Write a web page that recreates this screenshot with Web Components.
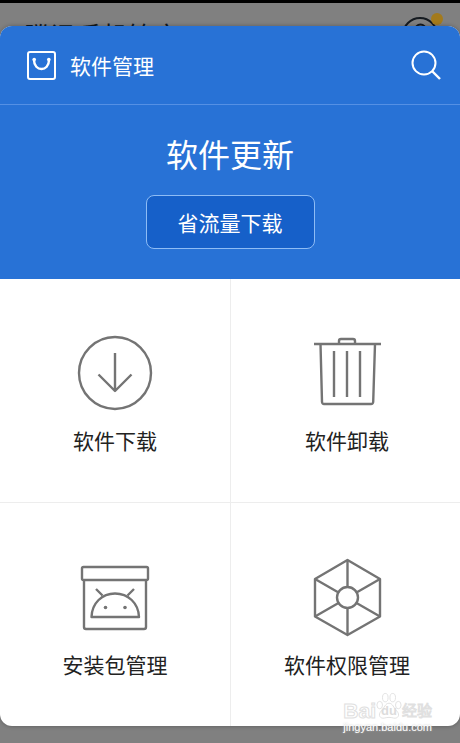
<!DOCTYPE html>
<html lang="zh-CN">
<head>
  <meta charset="UTF-8">
  <meta name="viewport" content="width=device-width, initial-scale=1">
  <title>软件管理</title>
  <style>
    body {
      margin: 0;
      background: #808080;
      color: #222;
      font-family: "Noto Sans CJK SC", sans-serif;
    }
  </style>
</head>
<body>
  <app-backdrop>腾讯手机管家</app-backdrop>
  <soft-sheet>
    <sheet-header slot="header">软件管理</sheet-header>
    <update-banner slot="banner" action="省流量下载">软件更新</update-banner>
    <tool-tile icon="download">软件下载</tool-tile>
    <tool-tile icon="trash">软件卸载</tool-tile>
    <tool-tile icon="package">安装包管理</tool-tile>
    <tool-tile icon="permission">软件权限管理</tool-tile>
  </soft-sheet>
  <water-mark></water-mark>

  <script>
    // dimmed page behind the sheet, only its top edge shows
    class AppBackdrop extends HTMLElement {
      constructor() {
        super();
        const shadow = this.attachShadow({ mode: "open" });
        shadow.innerHTML = `
          <style>
            :host {
              display: flex;
              justify-content: space-between;
              box-sizing: border-box;
              height: 26px;
              padding: 14px 16px 0 24px;
              border-top: 3px solid #000;
              color: #101820;
              font-size: 26px;
              line-height: 36px;
            }
            svg {
              flex: none;
              margin-top: -14px;
            }
          </style>
          <span><slot></slot></span>
          <svg width="44" height="44" viewBox="0 0 44 44" fill="none" stroke="#151a20" stroke-width="2" aria-hidden="true">
            <circle cx="20" cy="32" r="17"/>
            <path d="M15 27a5.500 5.500 0 0 1 11 0c0 4-5.500 4-5.500 8"/>
            <circle cx="37" cy="16" r="6" fill="#a37a1c" stroke="none"/>
          </svg>
        `;
      }
    }
    customElements.define("app-backdrop", AppBackdrop);

    // white card with the header, the banner and the grid of tools
    class SoftSheet extends HTMLElement {
      constructor() {
        super();
        const shadow = this.attachShadow({ mode: "open" });
        shadow.innerHTML = `
          <style>
            :host {
              display: block;
              position: relative;
              overflow: hidden;
              margin-bottom: 17px;
              border-radius: 12px;
              background: #fff;
              box-shadow: 0 0 4px rgba(0, 0, 0, 0.3);
            }
            nav {
              display: grid;
              grid-template-columns: 1fr 1fr;
            }
            ::slotted(tool-tile:nth-of-type(even)) {
              padding-left: 3px;
              border-left: 1px solid #ededed;
            }
            ::slotted(tool-tile:nth-of-type(-n+2)) {
              border-bottom: 1px solid #ededed;
            }
          </style>
          <slot name="header"></slot>
          <slot name="banner"></slot>
          <nav><slot></slot></nav>
        `;
      }
    }
    customElements.define("soft-sheet", SoftSheet);

    class SheetHeader extends HTMLElement {
      constructor() {
        super();
        const shadow = this.attachShadow({ mode: "open" });
        shadow.innerHTML = `
          <style>
            :host {
              display: flex;
              align-items: center;
              height: 78px;
              padding: 0 18px 0 26px;
              border-bottom: 1px solid #5590e4;
              background: #2872d6;
              color: #fff;
            }
            h1 {
              flex: 1;
              margin: 0 0 0 12px;
              font-size: 21px;
              font-weight: 400;
              line-height: 24px;
            }
            button {
              display: flex;
              padding: 0;
              border: 0;
              background: none;
              color: inherit;
            }
            svg {
              fill: none;
              stroke: currentColor;
              stroke-width: 2;
            }
          </style>
          <svg width="32" height="32" viewBox="0 0 32 32" aria-hidden="true">
            <rect x="2" y="3" width="27" height="27" rx="2"/>
            <path d="M8 11C8 23 23 23 23 11" stroke-width="2.400"/>
            <circle cx="8.200" cy="10.500" r="1.800" fill="currentColor" stroke="none"/>
            <circle cx="22.800" cy="10.500" r="1.800" fill="currentColor" stroke="none"/>
          </svg>
          <h1><slot></slot></h1>
          <button type="button" aria-label="搜索">
            <svg width="32" height="32" viewBox="0 0 32 32" aria-hidden="true">
              <circle cx="14" cy="14" r="11.500"/>
              <path d="M22 22l8 8" stroke-width="2.400"/>
            </svg>
          </button>
        `;
      }
    }
    customElements.define("sheet-header", SheetHeader);

    class UpdateBanner extends HTMLElement {
      constructor() {
        super();
        const shadow = this.attachShadow({ mode: "open" });
        shadow.innerHTML = `
          <style>
            :host {
              display: flex;
              flex-direction: column;
              align-items: center;
              gap: 22px;
              padding: 28px 0 30px;
              background: #2872d6;
              color: #fff;
            }
            h2 {
              margin: 0;
              font-size: 32px;
              font-weight: 400;
              line-height: 40px;
            }
            button {
              height: 54px;
              padding: 0 31px;
              border: 1px solid #8ebcf5;
              border-radius: 8px;
              background: #1660c9;
              color: inherit;
              font: inherit;
              font-size: 21px;
              line-height: 24px;
            }
          </style>
          <h2><slot></slot></h2>
          <button type="button">${this.getAttribute("action")}</button>
        `;
      }
    }
    customElements.define("update-banner", UpdateBanner);

    // line icons of the tiles, all drawn on an 80x80 box
    const icons = {
      download: `
        <circle cx="40" cy="40" r="36"/>
        <path d="M40 20v38M23.500 41.500L40 58l16.500-16.500"/>
      `,
      trash: `
        <path d="M7 11h67M13.500 11l1.500 58q.200 2 2 2h47q2 0 2.200-2L68 11"/>
        <path d="M32 11V8q0-2 2-2h12q2 0 2 2v3"/>
        <path d="M27 18v46M40 18v46M53 18v46"/>
      `,
      package: `
        <rect x="7" y="10" width="66" height="13" rx="1.500"/>
        <path d="M9 23v47q0 2 2 2h58q2 0 2-2V23"/>
        <path d="M16.500 60C17 46 27 36.500 40 36.500S63.500 46 64 60z"/>
        <path d="M21 32l6.500 6.500M59 32l-6.500 6.500"/>
        <circle cx="30.500" cy="50.500" r="1.800" fill="currentColor" stroke="none"/>
        <circle cx="50" cy="50.500" r="1.800" fill="currentColor" stroke="none"/>
      `,
      permission: `
        <path d="M40.500 3L73 22v37.500L40.500 78 8 59.500V22z"/>
        <circle cx="40.500" cy="40.500" r="10.500"/>
        <path d="M40.500 3v27M40.500 51v27M8 22l23.500 13.500M73 22L49.500 35.500M8 59.500L31.500 46M73 59.500L49.500 46"/>
      `
    };

    class ToolTile extends HTMLElement {
      constructor() {
        super();
        const shadow = this.attachShadow({ mode: "open" });
        shadow.innerHTML = `
          <style>
            :host {
              display: block;
            }
            a {
              display: flex;
              flex-direction: column;
              align-items: center;
              gap: 15px;
              padding: 54px 0 50px;
              color: #222;
              font-size: 21px;
              line-height: 24px;
              text-decoration: none;
            }
            svg {
              fill: none;
              stroke: currentColor;
              stroke-width: 2.4;
              stroke-linejoin: round;
              color: #747474;
            }
          </style>
          <a href="#">
            <svg width="80" height="80" viewBox="0 0 80 80" aria-hidden="true">${icons[this.getAttribute("icon")]}</svg>
            <span><slot></slot></span>
          </a>
        `;
      }
    }
    customElements.define("tool-tile", ToolTile);

    // faint site mark that lies over the bottom right corner
    class WaterMark extends HTMLElement {
      constructor() {
        super();
        const shadow = this.attachShadow({ mode: "open" });
        shadow.innerHTML = `
          <style>
            :host {
              display: flex;
              flex-direction: column;
              align-items: center;
              position: absolute;
              right: 28px;
              bottom: 10px;
              color: #fff;
              font-family: "Liberation Sans", "Noto Sans CJK SC", sans-serif;
              pointer-events: none;
            }
            .logo {
              display: flex;
              align-items: flex-end;
              font-size: 21px;
              font-weight: 700;
              line-height: 20px;
              -webkit-text-stroke: 1px #e0e0e0;
            }
            .cn {
              font-size: 15px;
              font-weight: 400;
            }
            .paw {
              display: grid;
            }
            .paw > * {
              grid-area: 1 / 1;
            }
            .paw span {
              align-self: end;
              justify-self: center;
              color: #dcdcdc;
              font-size: 13px;
              -webkit-text-stroke: 0;
            }
            small {
              font-size: 11px;
              line-height: 12px;
              text-shadow: 0 0 2px #bbb;
            }
          </style>
          <div class="logo">
            <span>Bai</span>
            <div class="paw">
              <svg width="26" height="30" viewBox="0 0 28 30" fill="#fff" stroke="#e0e0e0" aria-hidden="true">
                <ellipse cx="4" cy="14" rx="3" ry="4"/>
                <ellipse cx="10" cy="6" rx="3" ry="4.500"/>
                <ellipse cx="18" cy="6" rx="3" ry="4.500"/>
                <ellipse cx="24" cy="14" rx="3" ry="4"/>
                <path d="M14 12c-4 0-5 5-8 8-5 5-1 9 3 8 4-1 6-1 10 0s8-3 3-8c-3-3-4-8-8-8z"/>
              </svg>
              <span>du</span>
            </div>
            <span class="cn">经验</span>
          </div>
          <small>jingyan.baidu.com</small>
        `;
      }
    }
    customElements.define("water-mark", WaterMark);
  </script>
</body>
</html>
